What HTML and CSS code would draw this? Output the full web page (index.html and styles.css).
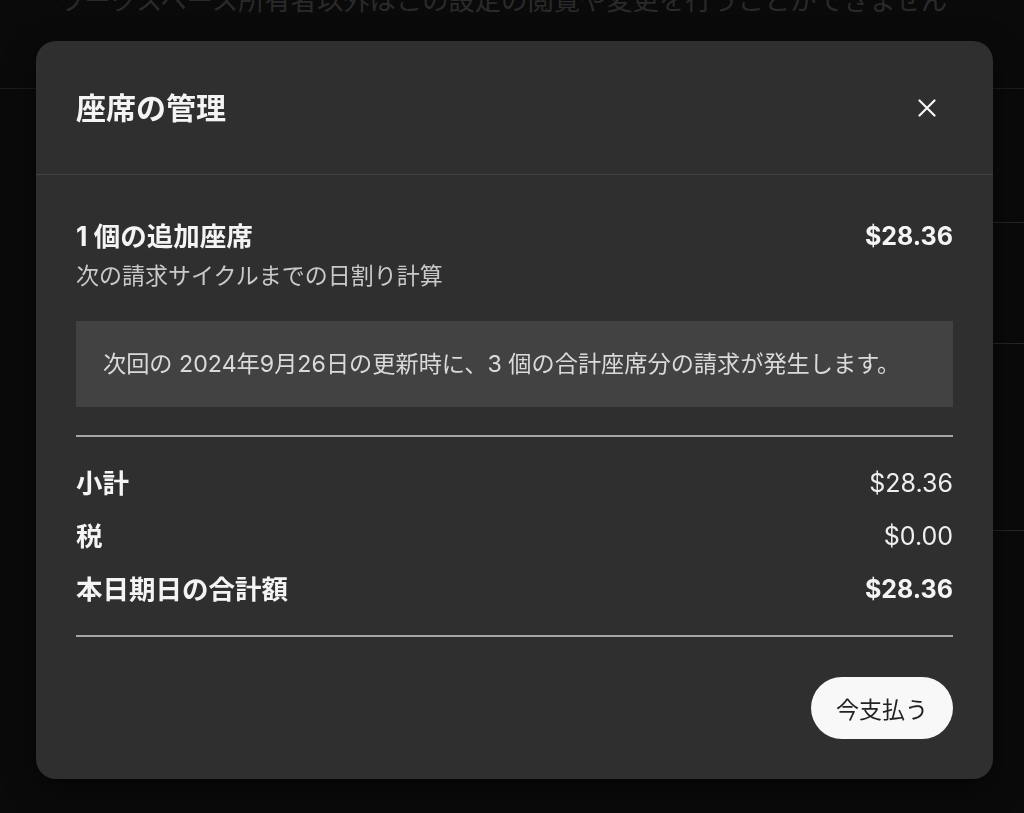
FILE: index.html
```html
<!DOCTYPE html>
<html lang="ja">

<head>
  <meta charset="UTF-8">
  <meta name="viewport" content="width=device-width, initial-scale=1.0">
  <title>座席の管理</title>
  <link rel="stylesheet" href="styles.css">
</head>

<body>
  <!-- 背景の設定ページ -->
  <div class="page-header">
    <p class="page-note">ワークスペース所有者以外はこの設定の閲覧や変更を行うことができません</p>
  </div>
  <div class="settings-list">
    <div class="settings-row row-a"></div>
    <div class="settings-row row-b"></div>
    <div class="settings-row row-c"></div>
  </div>

  <!-- モーダル -->
  <div class="modal">
    <div class="modal-header">
      <h2 class="modal-title">座席の管理</h2>
      <button class="close" aria-label="閉じる">
        <svg width="18" height="18" viewBox="0 0 18 18">
          <path d="M1.5 1.5 L16.5 16.5 M16.5 1.5 L1.5 16.5" stroke="#f5f5f5" stroke-width="2.2" stroke-linecap="round" fill="none" />
        </svg>
      </button>
    </div>

    <div class="modal-body">
      <div class="line-item">
        <div class="item-title">
          <span>1&nbsp;個の追加座席</span>
          <span class="amount">$28.36</span>
        </div>
        <div class="item-sub">次の請求サイクルまでの日割り計算</div>
      </div>

      <div class="notice">次回の 2024年9月26日の更新時に、3 個の合計座席分の請求が発生します。</div>

      <div class="summary">
        <div class="summary-row">
          <span class="label">小計</span>
          <span class="value">$28.36</span>
        </div>
        <div class="summary-row">
          <span class="label">税</span>
          <span class="value">$0.00</span>
        </div>
        <div class="summary-row total">
          <span class="label">本日期日の合計額</span>
          <span class="value">$28.36</span>
        </div>
      </div>

      <div class="modal-footer">
        <button class="pay-btn">今支払う</button>
      </div>
    </div>
  </div>
</body>

</html>
```

FILE: styles.css
```css
* {
  margin: 0;
  padding: 0;
  box-sizing: border-box;
}

body {
  font-family: "Inter", "Noto Sans CJK JP", sans-serif;
  background-color: #0a0a0a;
  color: #f2f2f2;
  overflow: hidden;
}

/* 背景ページ */
.page-header {
  height: 89px;
  border-bottom: 1px solid #1c1c1c;
  overflow: hidden;
}

.page-note {
  margin-top: -12px;
  padding-left: 58px;
  font-size: 26.3px;
  line-height: 26px;
  color: #2a2a2a;
  white-space: nowrap;
}

.settings-list {
  margin-left: 60px;
}

.settings-row {
  border-bottom: 1px solid #262626;
}

.row-a {
  height: 134px;
}

.row-b {
  height: 121px;
}

.row-c {
  height: 187px;
}

/* モーダル */
.modal {
  position: fixed;
  left: 36px;
  top: 41px;
  width: 957px;
  height: 738px;
  background: #2f2f2f;
  border-radius: 20px;
  box-shadow: 0 10px 30px rgba(0, 0, 0, 0.5);
  display: flex;
  flex-direction: column;
}

.modal-header {
  flex-shrink: 0;
  height: 134px;
  padding: 0 50px 0 40px;
  border-bottom: 1px solid #434343;
  display: flex;
  justify-content: space-between;
  align-items: center;
}

.modal-title {
  font-size: 30px;
  font-weight: 700;
  color: #f4f4f4;
  line-height: 36px;
}

.close {
  background: none;
  border: none;
  width: 32px;
  height: 32px;
  display: flex;
  align-items: center;
  justify-content: center;
  cursor: pointer;
}

.modal-body {
  padding: 43px 40px 40px;
  display: flex;
  flex-direction: column;
}

.item-title {
  display: flex;
  justify-content: space-between;
  align-items: center;
  height: 36px;
  font-size: 26.5px;
  font-weight: 700;
  line-height: 36px;
  color: #f4f4f4;
}

.item-title .amount {
  font-size: 25px;
}

.item-sub {
  margin-top: 4px;
  font-size: 23px;
  line-height: 36px;
  color: #c9c9c9;
}

.notice {
  margin-top: 27px;
  padding: 25px 27px;
  background: #424242;
  font-size: 23.2px;
  line-height: 36px;
  color: #dadada;
}

.summary {
  margin-top: 28px;
  padding: 28px 0;
  border-top: 2px solid #a6a6a6;
  border-bottom: 2px solid #a6a6a6;
  display: flex;
  flex-direction: column;
  gap: 17px;
}

.summary-row {
  display: flex;
  justify-content: space-between;
  align-items: center;
  height: 36px;
  font-size: 25px;
  line-height: 36px;
}

.summary-row .label {
  font-size: 26.5px;
  font-weight: 700;
  color: #f4f4f4;
}

.summary-row .value {
  color: #eeeeee;
}

.summary-row.total .value {
  font-weight: 700;
  color: #f4f4f4;
}

.modal-footer {
  margin-top: 40px;
  display: flex;
  justify-content: flex-end;
}

.pay-btn {
  height: 62px;
  padding: 0 25px;
  border: none;
  border-radius: 31px;
  background: #f8f8f8;
  color: #222;
  font-family: "Inter", "Noto Sans CJK JP", sans-serif;
  font-size: 23px;
  cursor: pointer;
}
```
